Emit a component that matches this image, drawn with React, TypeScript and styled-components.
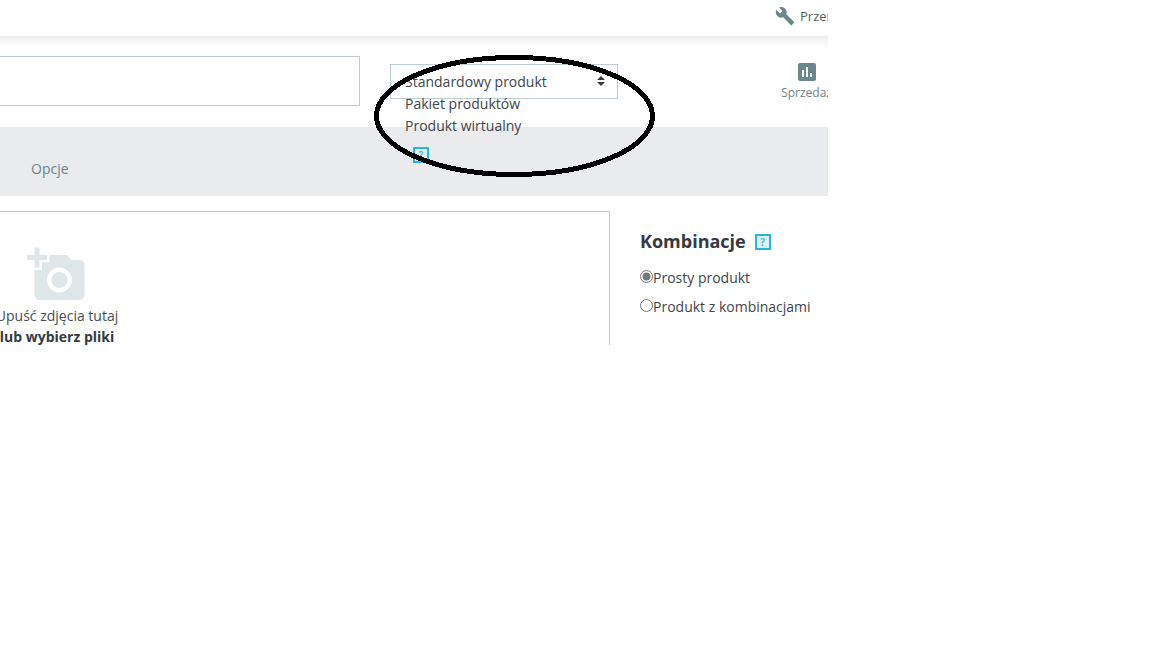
import React, { useState } from "react";
import styled, { createGlobalStyle } from "styled-components";

const GlobalStyle = createGlobalStyle`
  *, *::before, *::after { box-sizing: border-box; }
  body {
    margin: 0;
    background: #fff;
    color: #41454c;
    font: 14px/22px "Open Sans", "Noto Sans", sans-serif;
  }
`;

const Shell = styled.div`
  position: relative;
  max-width: 828px;
  overflow: hidden;
`;

const TopBar = styled.nav`
  display: flex;
  justify-content: flex-end;
  height: 36px;
  padding: 6px 0;
`;

const MaintenanceLink = styled.a`
  display: flex;
  gap: 5px;
  width: 53px;
  color: #4e6167;
  font-size: 13px;
  line-height: 20px;
  white-space: nowrap;
  text-decoration: none;

  svg {
    flex: none;
    fill: #6c868e;
  }
`;

const ProductHeader = styled.header`
  display: grid;
  grid-template-columns: minmax(0, 360px) 228px 1fr;
  column-gap: 30px;
  align-items: start;
  height: 91px;
  padding-top: 20px;
  background: linear-gradient(#ebebeb, #f8f8f8 6px, #fff 12px);
`;

const NameInput = styled.input`
  width: 100%;
  height: 50px;
  padding: 0 15px;
  border: 1px solid #bbcdd2;
  border-left: 0;
  border-radius: 0;
  background: #fff;
  font: inherit;
`;

const TypePicker = styled.div`
  position: relative;
  margin-top: 8px;
`;

const TypeSelect = styled.select`
  display: block;
  width: 100%;
  height: 35px;
  padding: 0 30px 0 14px;
  appearance: none;
  border: 1px solid #bbcdd2;
  border-radius: 0;
  background: #fff;
  color: #41454c;
  font: inherit;
`;

const SelectArrows = styled.svg`
  position: absolute;
  top: 12px;
  right: 12px;
  fill: #363a41;
  pointer-events: none;
`;

const TypeMenu = styled.div`
  position: absolute;
  z-index: 1;
  top: 29px;
  left: 15px;
`;

const TypeOption = styled.div`
  line-height: 22px;
`;

const HelpButton = styled.button`
  display: block;
  width: 16px;
  height: 16px;
  padding: 0;
  border: 2px solid #25b9d7;
  background: #dff2f7;
  color: #4fb6cf;
  font: 700 10px/12px "Open Sans", sans-serif;
`;

const MenuHelp = styled.div`
  margin: 10px 8px 0;
`;

const SalesLink = styled.a`
  display: flex;
  flex-direction: column;
  align-items: center;
  justify-self: end;
  margin: 4px -4px 0 0;
  color: #6c868e;
  font-size: 12px;
  line-height: 17px;
  text-decoration: none;

  svg {
    fill: #6c868e;
  }
`;

const TabBar = styled.nav`
  height: 69px;
  padding: 31px;
  background: #e9ebec;
`;

const Tab = styled.a`
  display: inline-block;
  color: #6c868e;
  text-decoration: none;
`;

const Content = styled.main`
  display: grid;
  grid-template-columns: minmax(0, 610px) 1fr;
  column-gap: 30px;
  padding-top: 15px;
`;

const DropZone = styled.section`
  height: 134px;
  padding-top: 33px;
  border: solid #bbcdd2;
  border-width: 1px 1px 0 0;
`;

const DropPrompt = styled.div`
  display: flex;
  flex-direction: column;
  align-items: center;
  width: 114px;
  line-height: 21px;
  color: #4a4e55;
  white-space: nowrap;

  svg {
    fill: #dde6e9;
  }

  strong {
    color: #363a41;
  }
`;

const Combinations = styled.fieldset`
  min-width: 0;
  margin: 0;
  padding: 19px 0 0;
  border: 0;
`;

const CombinationsHead = styled.div`
  display: flex;
  align-items: center;
  gap: 9px;
  margin-bottom: 14px;
`;

const Title = styled.h2`
  margin: 0;
  padding-bottom: 2px;
  color: #363a41;
  font-size: 18px;
  font-weight: 700;
  line-height: 22px;
`;

const RadioRow = styled.label`
  display: flex;
  align-items: center;
  width: max-content;
  margin-bottom: 10px;
  line-height: 19px;
`;

const Radio = styled.input`
  width: 13px;
  height: 13px;
  margin: 0 0 3px;
  accent-color: #767676;
`;

const Marker = styled.svg`
  position: absolute;
  z-index: 2;
  top: 55px;
  left: 374px;
  pointer-events: none;
`;

const productTypes = ["Standardowy produkt", "Pakiet produktów", "Produkt wirtualny"];
const combinationModes = ["Prosty produkt", "Produkt z kombinacjami"];

export default function App() {
  const [type, setType] = useState(productTypes[0]);
  const [mode, setMode] = useState(combinationModes[0]);

  return (
    <>
      <GlobalStyle />
      <Shell>
        <TopBar>
          <MaintenanceLink href="#maintenance">
            <svg width="20" height="20" viewBox="0 0 24 24" aria-hidden="true">
              <path d="M22.7 19l-9.1-9.1c.9-2.3.4-5-1.5-6.9-2-2-5-2.4-7.4-1.3L9 6 6 9 1.6 4.7C.4 7.1.9 10.1 2.9 12.1c1.9 1.9 4.6 2.4 6.9 1.5l9.1 9.1c.4.4 1 .4 1.4 0l2.3-2.3c.5-.4.5-1.1.1-1.4z" />
            </svg>
            Przerwa
          </MaintenanceLink>
        </TopBar>

        <ProductHeader>
          <NameInput type="text" aria-label="Nazwa produktu" />
          <TypePicker>
            <TypeSelect
              aria-label="Typ produktu"
              value={type}
              onChange={(e) => setType(e.target.value)}
            >
              {productTypes.map((t) => (
                <option key={t}>{t}</option>
              ))}
            </TypeSelect>
            <SelectArrows width="9" height="11" viewBox="0 0 9 11" aria-hidden="true">
              <path d="M4 0L8 4H0zM0 6h8L4 10z" />
            </SelectArrows>
            <TypeMenu>
              {productTypes.slice(1).map((t) => (
                <TypeOption key={t} onClick={() => setType(t)}>
                  {t}
                </TypeOption>
              ))}
              <MenuHelp>
                <HelpButton type="button">?</HelpButton>
              </MenuHelp>
            </TypeMenu>
          </TypePicker>
          <SalesLink href="#sales">
            <svg width="24" height="24" viewBox="0 0 24 24" aria-hidden="true">
              <path d="M19 3H5c-1.1 0-2 .9-2 2v14c0 1.1.9 2 2 2h14c1.1 0 2-.9 2-2V5c0-1.1-.9-2-2-2zM9 17H7v-7h2v7zm4 0h-2V7h2v10zm4 0h-2v-4h2v4z" />
            </svg>
            Sprzedaż
          </SalesLink>
        </ProductHeader>

        <TabBar>
          <Tab href="#options">Opcje</Tab>
        </TabBar>

        <Content>
          <DropZone>
            <DropPrompt>
              <svg width="60" height="60" viewBox="0 0 24 24" aria-hidden="true">
                <path d="M3 4V1h2v3h3v2H5v3H3V6H0V4h3zm3 6V7h3V4h7l1.83 2H21c1.1 0 2 .9 2 2v12c0 1.1-.9 2-2 2H5c-1.1 0-2-.9-2-2V10h3zm7 9c2.76 0 5-2.24 5-5s-2.24-5-5-5-5 2.24-5 5 2.24 5 5 5zm-3.2-5c0 1.77 1.43 3.2 3.2 3.2s3.2-1.43 3.2-3.2-1.43-3.2-3.2-3.2-3.2 1.43-3.2 3.2z" />
              </svg>
              <span>Upuść zdjęcia tutaj</span>
              <strong>lub wybierz pliki</strong>
            </DropPrompt>
          </DropZone>
          <Combinations aria-labelledby="combinations-title">
            <CombinationsHead>
              <Title id="combinations-title">Kombinacje</Title>
              <HelpButton type="button">?</HelpButton>
            </CombinationsHead>
            {combinationModes.map((m) => (
              <RadioRow key={m}>
                <Radio
                  type="radio"
                  name="combinations"
                  checked={mode === m}
                  onChange={() => setMode(m)}
                />
                {m}
              </RadioRow>
            ))}
          </Combinations>
        </Content>

        <Marker width="281" height="122" viewBox="0 0 281 122" aria-hidden="true">
          <ellipse
            cx="140.5"
            cy="61"
            rx="138"
            ry="58.5"
            fill="none"
            stroke="#000"
            strokeWidth="5"
            shapeRendering="crispEdges"
          />
        </Marker>
      </Shell>
    </>
  );
}
